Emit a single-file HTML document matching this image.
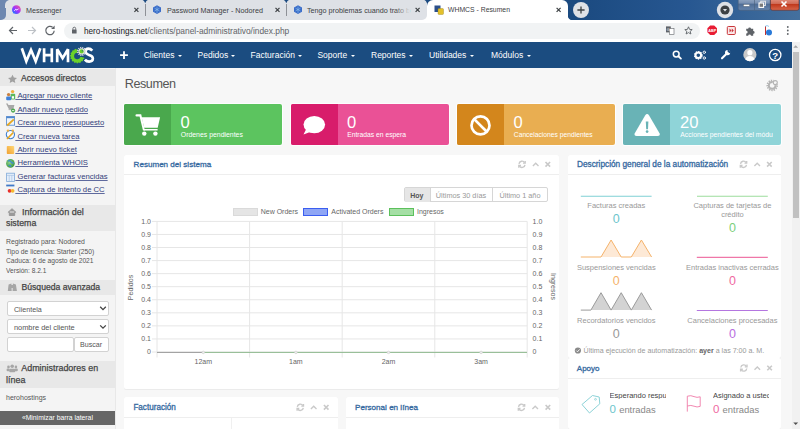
<!DOCTYPE html>
<html><head><meta charset="utf-8"><style>
*{box-sizing:border-box;margin:0;padding:0}
html,body{width:800px;height:429px;overflow:hidden;background:#f7f7f7}
body{position:relative;font-family:"Liberation Sans",sans-serif;color:#333}
.a{position:absolute}
.t{position:absolute;white-space:nowrap;line-height:1}
#ov{position:absolute;left:0;top:0;width:800px;height:429px;overflow:visible}
/* chrome */
#strip{left:0;top:0;width:800px;height:20px;background:linear-gradient(90deg,#1a477d 0%,#1b4a80 72%,#275791 86%,#44709e 100%)}
#lframe{left:0;top:0;width:5.5px;height:19.5px;background:#6d87b0;border-bottom-right-radius:5px}
#tabs{left:0;top:0;width:427px;height:20px;background:#dee1e6;border-bottom-right-radius:5px}
#atab{left:427px;top:0;width:141px;height:20px;background:#fff;border-top-left-radius:6px;border-top-right-radius:6px}
.notch{position:absolute;top:0;width:5px;height:2.6px;background:#1b4a80;border-radius:0 0 2.5px 2.5px}
.sep{position:absolute;top:4px;width:1px;height:12px;background:#8e9197}
.tabt{font-size:7.2px;color:#3c4043}
#toolbar{left:0;top:20px;width:800px;height:21.5px;background:#fff}
#omni{left:63.5px;top:22.5px;width:636px;height:16.5px;background:#f1f3f4;border-radius:8.5px}
#nav{left:0;top:41.5px;width:791.5px;height:26.2px;background:#1b4c80}
.nt{font-size:8.5px;color:#fff;top:51px}
.caret{position:absolute;top:54.8px;width:0;height:0;border-left:2.2px solid transparent;border-right:2.2px solid transparent;border-top:2.2px solid #fff}
#scroll{left:791.5px;top:41.5px;width:8.5px;height:387.5px;background:#f1f1f1}
#thumb{left:792.5px;top:52px;width:6.5px;height:166px;background:#c1c1c1}
/* sidebar */
#side{left:0;top:67.7px;width:116px;height:361.3px;background:#f4f4f4;border-right:1.5px solid #e8e8e8}
.sh{position:absolute;left:0;width:114.5px;background:#e8e8e8}
.sht{font-size:8.8px;color:#444;-webkit-text-stroke:0.25px #444}
.sl{font-size:7.7px;color:#33407a;text-decoration:underline;text-decoration-color:#5f6a9e;text-underline-offset:1px}
.si{font-size:6.85px;color:#555}
.sel{position:absolute;background:#fff;border:1px solid #d2d2d2;border-radius:2px}
/* content */
.w{position:absolute;top:104px;height:41px;width:158.2px;border-radius:2px;overflow:hidden;box-shadow:0 0 0 0.8px #fff}
.wi{position:absolute;left:0;top:0;width:47.2px;height:41px}
.wn{font-size:16.6px;color:#fff;top:114.8px}
.wl{font-size:6.9px;color:#fff;top:131.8px}
.panel{position:absolute;background:#fff;border-radius:2px;box-shadow:0 0.6px 0.8px rgba(0,0,0,0.05)}
.ph{position:absolute;left:0;right:0;height:1px;background:#eeeeee}
.pt{font-size:8.1px;color:#3569a0;-webkit-text-stroke:0.3px #3569a0}
.cl{font-size:7px;color:#666}
.al{font-size:7.5px;color:#999;text-align:center}
.an{font-size:12.5px;text-align:center}
</style></head><body>
<!-- chrome tab strip -->
<div id="strip" class="a"></div>
<div class="a" style="left:420px;top:13px;width:8px;height:7px;background:#fff"></div>
<div id="tabs" class="a"></div>
<div id="lframe" class="a"></div><div class="a" style="left:5px;top:0;width:4px;height:3px;background:#6d87b0"></div><div class="a" style="left:5px;top:0;width:8px;height:8px;background:#dee1e6;border-top-left-radius:5px"></div>
<div id="atab" class="a"></div>



<div class="sep" style="left:145px"></div>
<div class="sep" style="left:286px"></div>
<div class="t tabt" style="left:26px;top:6.6px">Messenger</div>
<div class="t tabt" style="left:167px;top:6.6px">Password Manager - Nodored</div>
<div class="t tabt" style="left:307px;top:6.6px">Tengo problemas cuando trato b</div>
<div class="t tabt" style="left:448px;top:6.9px;font-size:6.85px">WHMCS - Resumen</div>

<!-- toolbar -->
<div id="toolbar" class="a"></div>
<div id="omni" class="a"></div>
<div class="t" style="left:84px;top:26.6px;font-size:8.2px;color:#202124">hero-hostings.net<span style="color:#5f6368;font-size:8.4px">/clients/panel-administrativo/index.php</span></div>

<!-- navbar -->
<div id="nav" class="a"></div>
<div class="t nt" style="left:143.7px">Clientes</div><div class="caret" style="left:177.5px"></div>
<div class="t nt" style="left:197.6px">Pedidos</div><div class="caret" style="left:231.4px"></div>
<div class="t nt" style="left:250.6px">Facturación</div><div class="caret" style="left:298.4px"></div>
<div class="t nt" style="left:317.4px">Soporte</div><div class="caret" style="left:350.8px"></div>
<div class="t nt" style="left:371px">Reportes</div><div class="caret" style="left:408.8px"></div>
<div class="t nt" style="left:429px">Utilidades</div><div class="caret" style="left:470.4px"></div>
<div class="t nt" style="left:491px">Módulos</div><div class="caret" style="left:527.4px"></div>

<div id="scroll" class="a"></div>
<div id="thumb" class="a"></div>

<!-- sidebar -->
<div id="side" class="a"></div>
<div class="sh" style="top:69px;height:16.6px"></div>
<div class="t sht" style="left:21px;top:74.2px;font-size:8.6px">Accesos directos</div>
<div class="t sl" style="left:15.35px;top:92.4px">&nbsp;Agregar nuevo cliente</div>
<div class="t sl" style="left:15.35px;top:105.7px">&nbsp;Añadir nuevo pedido</div>
<div class="t sl" style="left:15.35px;top:119.1px">&nbsp;Crear nuevo presupuesto</div>
<div class="t sl" style="left:15.35px;top:132.5px">&nbsp;Crear nueva tarea</div>
<div class="t sl" style="left:15.35px;top:145.8px">&nbsp;Abrir nuevo ticket</div>
<div class="t sl" style="left:15.35px;top:159.2px">&nbsp;Herramienta WHOIS</div>
<div class="t sl" style="left:15.35px;top:172.6px">&nbsp;Generar facturas vencidas</div>
<div class="t sl" style="left:15.35px;top:185.9px">&nbsp;Captura de intento de CC</div>

<div class="sh" style="top:204.6px;height:26px"></div>
<div class="t sht" style="left:21.9px;top:207.6px;font-size:9.05px">Información del</div>
<div class="t sht" style="left:6px;top:219.1px;font-size:8.8px">sistema</div>
<div class="t si" style="left:6px;top:239.2px;font-size:6.85px">Registrado para: Nodored</div>
<div class="t si" style="left:6px;top:248.6px;font-size:6.75px">Tipo de licencia: Starter (250)</div>
<div class="t si" style="left:6px;top:258.1px;font-size:6.68px">Caduca: 6 de agosto de 2021</div>
<div class="t si" style="left:6px;top:267.6px;font-size:6.6px">Versión: 8.2.1</div>

<div class="sh" style="top:280px;height:14.5px"></div>
<div class="t sht" style="left:21.5px;top:283.1px;font-size:8.64px">Búsqueda avanzada</div>
<div class="sel" style="left:6.5px;top:300.6px;width:102px;height:15px"></div>
<div class="t si" style="left:13.9px;top:305.5px;font-size:7.2px">Clientela</div>
<div class="sel" style="left:6.5px;top:319.4px;width:102px;height:14.3px"></div>
<div class="t si" style="left:13.9px;top:324px;font-size:7.45px">nombre del cliente</div>
<div class="sel" style="left:6.5px;top:337.3px;width:67px;height:15.2px"></div>
<div class="sel" style="left:74px;top:337.3px;width:34.5px;height:15.2px"></div>
<div class="t si" style="left:80px;top:342.3px;font-size:7.1px">Buscar</div>

<div class="sh" style="top:361px;height:26.8px"></div>
<div class="t sht" style="left:21.25px;top:364.2px;font-size:8.93px">Administradores en</div>
<div class="t sht" style="left:6px;top:376px;font-size:8.95px">línea</div>
<div class="t si" style="left:6px;top:393.5px;font-size:7px">herohostings</div>
<div class="a" style="left:0;top:411px;width:114.8px;height:13.6px;background:#666"></div>
<div class="t" style="left:0;top:415px;width:114.8px;text-align:center;font-size:6.8px;color:#fff">«Minimizar barra lateral</div>

<!-- content -->
<div class="t" style="left:124.8px;top:78px;font-size:12.6px;letter-spacing:-0.45px;color:#555">Resumen</div>

<div class="w" style="left:124px;background:#5cc45f"><div class="wi" style="background:#4aa84d"></div></div>
<div class="w" style="left:290.9px;background:#ea5196"><div class="wi" style="background:#d81c6b"></div></div>
<div class="w" style="left:457.2px;background:#e9ae51"><div class="wi" style="background:#d3861c"></div></div>
<div class="w" style="left:623.3px;background:#8fd4d8"><div class="wi" style="background:#69b3b6"></div></div>
<div class="t wn" style="left:180.5px">0</div><div class="t wl" style="left:180.8px">Ordenes pendientes</div>
<div class="t wn" style="left:347px">0</div><div class="t wl" style="left:347.2px;font-size:6.75px">Entradas en espera</div>
<div class="t wn" style="left:513.6px">0</div><div class="t wl" style="left:513.8px;font-size:6.72px">Cancelaciones pendientes</div>
<div class="t wn" style="left:680px">20</div><div class="t wl" style="left:680.3px;width:93px;overflow:hidden;font-size:6.8px">Acciones pendientes del módulo</div>

<!-- panels -->
<div class="panel" style="left:124px;top:154.5px;width:434.7px;height:234.5px"><div class="ph" style="top:19.6px"></div></div>
<div class="t pt" style="left:133.6px;top:161.3px;font-size:8.07px">Resumen del sistema</div>
<div class="panel" style="left:567.5px;top:154.5px;width:213.5px;height:203px"><div class="ph" style="top:19.6px"></div></div>
<div class="t pt" style="left:577px;top:160.7px;font-size:8.28px">Descripción general de la automatización</div>
<div class="panel" style="left:567.5px;top:358px;width:213.8px;height:71px"><div class="ph" style="top:19.5px"></div></div>
<div class="t pt" style="left:576.8px;top:364.8px;font-size:8.02px">Apoyo</div>
<div class="panel" style="left:124px;top:397px;width:213.5px;height:40px"><div class="ph" style="top:20.3px"></div><div class="a" style="left:106.5px;top:21px;width:1px;height:20px;background:#f0f0f0"></div></div>
<div class="t pt" style="left:133.4px;top:404px;font-size:8.15px">Facturación</div>
<div class="panel" style="left:346px;top:397px;width:212.7px;height:40px"><div class="ph" style="top:20.3px"></div></div>
<div class="t pt" style="left:355px;top:404.2px;font-size:8.09px">Personal en línea</div>

<!-- chart buttons -->
<div class="a" style="left:404px;top:187px;width:143.6px;height:15.2px;border:0.8px solid #d6d6d6;border-radius:2px;background:#fff"></div>
<div class="a" style="left:404.5px;top:187.5px;width:25.1px;height:14px;background:#e6e6e6"></div>
<div class="a" style="left:429.6px;top:187.5px;width:0.8px;height:14px;background:#d6d6d6"></div>
<div class="a" style="left:492.4px;top:187.5px;width:0.8px;height:14px;background:#d6d6d6"></div>
<div class="t" style="left:404px;top:192px;width:25.6px;text-align:center;font-size:7px;font-weight:bold;color:#555">Hoy</div>
<div class="t" style="left:429.6px;top:191.8px;width:62.8px;text-align:center;font-size:7.3px;color:#999">Últimos 30 días</div>
<div class="t" style="left:492.4px;top:191.8px;width:55.2px;text-align:center;font-size:7.3px;color:#999">Último 1 año</div>

<!-- chart legend -->
<div class="a" style="left:233px;top:208px;width:25px;height:8.4px;background:#e5e5e5;border:1px solid #dadada"></div>
<div class="t cl" style="left:260.7px;top:208.2px">New Orders</div>
<div class="a" style="left:303.3px;top:208px;width:25px;height:8.4px;background:#8fa6f5;border:1.2px solid #3b5ef0"></div>
<div class="t cl" style="left:331.3px;top:208.2px">Activated Orders</div>
<div class="a" style="left:389.3px;top:208px;width:25px;height:8.4px;background:#a5dfa5;border:1.2px solid #5cc05c"></div>
<div class="t cl" style="left:417px;top:208.2px">Ingresos</div>

<!-- chart labels -->
<div class="t cl" style="left:131px;top:217.6px;width:20px;text-align:right">1.0</div>
<div class="t cl" style="left:131px;top:230.6px;width:20px;text-align:right">0.9</div>
<div class="t cl" style="left:131px;top:243.6px;width:20px;text-align:right">0.8</div>
<div class="t cl" style="left:131px;top:256.6px;width:20px;text-align:right">0.7</div>
<div class="t cl" style="left:131px;top:269.6px;width:20px;text-align:right">0.6</div>
<div class="t cl" style="left:131px;top:282.6px;width:20px;text-align:right">0.5</div>
<div class="t cl" style="left:131px;top:295.6px;width:20px;text-align:right">0.4</div>
<div class="t cl" style="left:131px;top:308.6px;width:20px;text-align:right">0.3</div>
<div class="t cl" style="left:131px;top:321.6px;width:20px;text-align:right">0.2</div>
<div class="t cl" style="left:131px;top:334.6px;width:20px;text-align:right">0.1</div>
<div class="t cl" style="left:131px;top:347.6px;width:20px;text-align:right">0</div>
<div class="t cl" style="left:532.6px;top:217.6px">1.0</div>
<div class="t cl" style="left:532.6px;top:230.6px">0.9</div>
<div class="t cl" style="left:532.6px;top:243.6px">0.8</div>
<div class="t cl" style="left:532.6px;top:256.6px">0.7</div>
<div class="t cl" style="left:532.6px;top:269.6px">0.6</div>
<div class="t cl" style="left:532.6px;top:282.6px">0.5</div>
<div class="t cl" style="left:532.6px;top:295.6px">0.4</div>
<div class="t cl" style="left:532.6px;top:308.6px">0.3</div>
<div class="t cl" style="left:532.6px;top:321.6px">0.2</div>
<div class="t cl" style="left:532.6px;top:334.6px">0.1</div>
<div class="t cl" style="left:532.6px;top:347.6px">0</div>
<div class="t cl" style="left:183.3px;top:357.5px;width:40px;text-align:center">12am</div>
<div class="t cl" style="left:275.9px;top:357.5px;width:40px;text-align:center">1am</div>
<div class="t cl" style="left:368.5px;top:357.5px;width:40px;text-align:center">2am</div>
<div class="t cl" style="left:461.1px;top:357.5px;width:40px;text-align:center">3am</div>
<div class="t cl" style="left:110.3px;top:283.5px;width:40px;text-align:center;transform:rotate(-90deg)">Pedidos</div>
<div class="t cl" style="left:532.6px;top:282.5px;width:40px;text-align:center;transform:rotate(90deg)">Ingresos</div>

<!-- automation -->
<div class="t al" style="left:566.3px;top:202.3px;width:100px">Facturas creadas</div>
<div class="t an" style="left:566.3px;top:213.3px;width:100px;color:#6cc5cc">0</div>
<div class="t al" style="left:682.4px;top:202.3px;width:100px">Capturas de tarjetas de</div>
<div class="t al" style="left:682.4px;top:210.7px;width:100px">crédito</div>
<div class="t an" style="left:682.4px;top:221.7px;width:100px;color:#7ccf7c">0</div>
<div class="t al" style="left:566.3px;top:263.9px;width:100px">Suspensiones vencidas</div>
<div class="t an" style="left:566.3px;top:274.9px;width:100px;color:#f5b36b">0</div>
<div class="t al" style="left:682.4px;top:263.9px;width:100px">Entradas inactivas cerradas</div>
<div class="t an" style="left:682.4px;top:274.9px;width:100px;color:#ef6a9f">0</div>
<div class="t al" style="left:566.3px;top:316.6px;width:100px">Recordatorios vencidos</div>
<div class="t an" style="left:566.3px;top:327.8px;width:100px;color:#999">0</div>
<div class="t al" style="left:682.4px;top:316.6px;width:100px">Cancelaciones procesadas</div>
<div class="t an" style="left:682.4px;top:327.8px;width:100px;color:#b86ee0">0</div>
<div class="t" style="left:583.6px;top:347.6px;font-size:7.1px;color:#999">Última ejecución de automatización: <b style="color:#666">ayer</b> a las 7:00 a. M.</div>

<!-- apoyo -->
<div class="t" style="left:609.6px;top:391.5px;font-size:7.5px;color:#444;width:56px;overflow:hidden">Esperando respuesta</div>
<div class="t" style="left:609.6px;top:403.6px;font-size:11.5px;color:#6cc5cc">0 <span style="font-size:9.4px;color:#888">entradas</span></div>
<div class="t" style="left:713px;top:392px;font-size:7.5px;color:#444;width:56px;overflow:hidden">Asignado a usted</div>
<div class="t" style="left:713px;top:403.6px;font-size:11.5px;color:#ef6a9f">0 <span style="font-size:9.4px;color:#888">entradas</span></div>

<svg id="ov" viewBox="0 0 800 429">
<line x1="152" y1="221.40" x2="527.2" y2="221.40" stroke="#e6e6e6" stroke-width="1"/>
<line x1="152" y1="234.46" x2="527.2" y2="234.46" stroke="#e6e6e6" stroke-width="1"/>
<line x1="152" y1="247.52" x2="527.2" y2="247.52" stroke="#e6e6e6" stroke-width="1"/>
<line x1="152" y1="260.58" x2="527.2" y2="260.58" stroke="#e6e6e6" stroke-width="1"/>
<line x1="152" y1="273.64" x2="527.2" y2="273.64" stroke="#e6e6e6" stroke-width="1"/>
<line x1="152" y1="286.70" x2="527.2" y2="286.70" stroke="#e6e6e6" stroke-width="1"/>
<line x1="152" y1="299.76" x2="527.2" y2="299.76" stroke="#e6e6e6" stroke-width="1"/>
<line x1="152" y1="312.82" x2="527.2" y2="312.82" stroke="#e6e6e6" stroke-width="1"/>
<line x1="152" y1="325.88" x2="527.2" y2="325.88" stroke="#e6e6e6" stroke-width="1"/>
<line x1="152" y1="338.94" x2="527.2" y2="338.94" stroke="#e6e6e6" stroke-width="1"/>
<line x1="152" y1="352.00" x2="527.2" y2="352.00" stroke="#e6e6e6" stroke-width="1"/>
<line x1="157" y1="221.4" x2="157" y2="357.5" stroke="#e6e6e6" stroke-width="1"/>
<line x1="249.6" y1="221.4" x2="249.6" y2="357.5" stroke="#e6e6e6" stroke-width="1"/>
<line x1="342.2" y1="221.4" x2="342.2" y2="357.5" stroke="#e6e6e6" stroke-width="1"/>
<line x1="434.8" y1="221.4" x2="434.8" y2="357.5" stroke="#e6e6e6" stroke-width="1"/>
<line x1="527.2" y1="221.4" x2="527.2" y2="357.5" stroke="#e6e6e6" stroke-width="1"/>
<line x1="157" y1="352.4" x2="203" y2="352.4" stroke="#9a9a9a" stroke-width="1"/>
<line x1="204" y1="352.4" x2="527" y2="352.4" stroke="#8fb98f" stroke-width="1"/>
<circle cx="203.3" cy="352.4" r="1.3" fill="#eee" stroke="#ccc" stroke-width="0.6"/>
<circle cx="295.9" cy="352.4" r="1.3" fill="#eee" stroke="#ccc" stroke-width="0.6"/>
<circle cx="388.5" cy="352.4" r="1.3" fill="#eee" stroke="#ccc" stroke-width="0.6"/>
<circle cx="481.1" cy="352.4" r="1.3" fill="#eee" stroke="#ccc" stroke-width="0.6"/>
<!-- automation lines -->
<line x1="580.8" y1="196.2" x2="651.6" y2="196.2" stroke="#7fd0d4" stroke-width="1.1"/>
<line x1="697" y1="196.2" x2="767.8" y2="196.2" stroke="#9ddc9d" stroke-width="1.1"/>
<polygon points="580.8,257 601.0,257 611.1,240 621.2,257 631.3,257 641.4,240 651.6,257" fill="#fde9d6"/>
<polyline points="580.8,257 601.0,257 611.1,240 621.2,257 631.3,257 641.4,240 651.6,257" fill="none" stroke="#f5b36b" stroke-width="1"/>
<line x1="696.8" y1="257.4" x2="767.8" y2="257.4" stroke="#ef77a8" stroke-width="1.1"/>
<polygon points="580.8,310.1 590.9,310.1 601.0,292.7 611.1,310.1 621.2,292.7 631.3,310.1 641.4,292.7 651.6,310.1" fill="#d3d3d3"/>
<polyline points="580.8,310.1 590.9,310.1 601.0,292.7 611.1,310.1 621.2,292.7 631.3,310.1 641.4,292.7 651.6,310.1" fill="none" stroke="#9b9b9b" stroke-width="1"/>
<line x1="696.8" y1="310.5" x2="767.8" y2="310.5" stroke="#b476e0" stroke-width="1.1"/>
<!-- check -->
<circle cx="577.9" cy="350.5" r="3.1" fill="#8a8a8a"/>
<polyline points="576.3,350.6 577.5,351.8 579.6,349.4" fill="none" stroke="#fff" stroke-width="0.9"/>

<!-- widget icons -->
<g fill="#fff">
 <path d="M136.6,114.3 H141.2 L144.9,130.6 H143 L139.6,116.6 H136.6 A1.15,1.15 0 0 1 136.6,114.3 z"/>
 <path d="M141.6,117.3 H160.1 L157.7,127.7 H144.2 z M143.6,128.9 H157.6 V130.6 H144 z"/>
 <circle cx="144.3" cy="133.6" r="2.2"/><circle cx="155.4" cy="133.6" r="2.2"/>
 <ellipse cx="314.3" cy="124.6" rx="10.8" ry="8.6"/>
 <path d="M306,129.5 L303.5,134.6 L311.5,131.6 z"/>
 <path d="M634.8,133.2 L645.1,115.4 Q647.1,112.6 649.1,115.4 L659.5,133.2 Q660.6,135.9 657.6,135.9 L636.7,135.9 Q633.7,135.9 634.8,133.2 z"/>
</g>
<path d="M645.8,121.6 h2.6 l-0.4,7.6 h-1.8 z" fill="#69b3b6"/>
<circle cx="647.1" cy="131.6" r="1.35" fill="#69b3b6"/>
<circle cx="480.5" cy="125.4" r="9" fill="none" stroke="#fff" stroke-width="2.7"/>
<line x1="474.2" y1="119.1" x2="486.8" y2="131.7" stroke="#fff" stroke-width="2.7"/>

<!-- panel header icons -->
<g fill="none" stroke="#c9c9c9" stroke-width="1.35" stroke-linecap="butt">
 <g transform="translate(522,164.3)"><path d="M-3,-0.5 A3,3 0 0 1 2.6,-1.6 M3,0.5 A3,3 0 0 1 -2.6,1.6"/><path d="M3.2,-3.4 v2.2 h-2.2 M-3.2,3.4 v-2.2 h2.2"/><polyline points="-2.8,1.8 0,-1 2.8,1.8" transform="translate(13.7,0)"/><path d="M23.5,-2.3 l4.6,4.6 M28.1,-2.3 l-4.6,4.6" stroke-width="1.6"/></g>
 <g transform="translate(743.5,164.3)"><path d="M-3,-0.5 A3,3 0 0 1 2.6,-1.6 M3,0.5 A3,3 0 0 1 -2.6,1.6"/><path d="M3.2,-3.4 v2.2 h-2.2 M-3.2,3.4 v-2.2 h2.2"/><polyline points="-2.8,1.8 0,-1 2.8,1.8" transform="translate(13.7,0)"/><path d="M23.6,-2.3 l4.6,4.6 M28.2,-2.3 l-4.6,4.6" stroke-width="1.6"/></g>
 <g transform="translate(743.8,368)"><path d="M-3,-0.5 A3,3 0 0 1 2.6,-1.6 M3,0.5 A3,3 0 0 1 -2.6,1.6"/><path d="M3.2,-3.4 v2.2 h-2.2 M-3.2,3.4 v-2.2 h2.2"/><polyline points="-2.8,1.8 0,-1 2.8,1.8" transform="translate(13.5,0)"/><path d="M23.5,-2.3 l4.6,4.6 M28.1,-2.3 l-4.6,4.6" stroke-width="1.6"/></g>
 <g transform="translate(300.3,407.3)"><path d="M-3,-0.5 A3,3 0 0 1 2.6,-1.6 M3,0.5 A3,3 0 0 1 -2.6,1.6"/><path d="M3.2,-3.4 v2.2 h-2.2 M-3.2,3.4 v-2.2 h2.2"/><polyline points="-2.8,1.8 0,-1 2.8,1.8" transform="translate(13.4,0)"/><path d="M23.6,-2.3 l4.6,4.6 M28.2,-2.3 l-4.6,4.6" stroke-width="1.6"/></g>
 <g transform="translate(521.5,407.3)"><path d="M-3,-0.5 A3,3 0 0 1 2.6,-1.6 M3,0.5 A3,3 0 0 1 -2.6,1.6"/><path d="M3.2,-3.4 v2.2 h-2.2 M-3.2,3.4 v-2.2 h2.2"/><polyline points="-2.8,1.8 0,-1 2.8,1.8" transform="translate(13.7,0)"/><path d="M24.1,-2.3 l4.6,4.6 M28.7,-2.3 l-4.6,4.6" stroke-width="1.6"/></g>
</g>

<!-- apoyo icons -->
<path d="M582,404.5 L592.5,395.5 L599.2,397 L599.8,403.8 L589.5,413 z" fill="none" stroke="#7fcdd2" stroke-width="0.9" stroke-linejoin="round"/>
<circle cx="595.5" cy="399.3" r="0.9" fill="none" stroke="#7fcdd2" stroke-width="0.7"/>
<path d="M687.3,411.6 V396.2 Q691,395 694,396.6 Q697,398 700.2,396.8 V406.4 Q697,407.6 694,406.2 Q691,404.8 687.3,406" fill="none" stroke="#ef7aa8" stroke-width="0.9"/>

<!-- settings gear -->
<g transform="translate(772.2,85.4)"><circle r="4.9" fill="none" stroke="#b4b4b4" stroke-width="1.7" stroke-dasharray="1.35 1.0"/><circle r="3.4" fill="none" stroke="#b4b4b4" stroke-width="2"/><circle cx="3.1" cy="-2.8" r="2.6" fill="#f7f7f7"/><circle cx="3.1" cy="-2.8" r="2" fill="none" stroke="#b4b4b4" stroke-width="1.1"/></g>

<!-- navbar -->
<path d="M124,51.3 v7.8 M120.1,55.2 h7.8" stroke="#fff" stroke-width="1.8"/>
<!-- logo -->
<g fill="none" stroke="#fff" stroke-width="2.7" stroke-linejoin="miter" stroke-miterlimit="3">
 <polyline points="21.8,48.3 26.3,61.2 31,50 35.7,61.2 40.3,48.3"/>
 <path d="M44.1,48.2 V62.2 M51.8,48.2 V62.2 M44.1,55.1 H51.8"/>
 <polyline points="57.2,62.2 57.2,49.2 62.6,58.2 68,49.2 68,62.2"/>
</g>
<path d="M92.3,50.6 Q90.6,48.6 88.4,48.6 Q85.6,48.6 85.6,51.6 Q85.6,54 89,54.9 Q92.9,55.9 92.9,58.6 Q92.9,61.6 89.1,61.6 Q86.4,61.6 84.9,59.6" fill="none" stroke="#fff" stroke-width="2.6"/>
<path d="M82.23,57.29 A5,5 0 1 1 77.4,51" fill="none" stroke="#6bd12a" stroke-width="3.4"/>
<path d="M83.68,57.68 A6.5,6.5 0 1 1 77.4,49.5" fill="none" stroke="#6bd12a" stroke-width="1.6" stroke-dasharray="1.35 1.2"/>
<g transform="translate(81.6,51.4)">
 <circle r="3.8" fill="none" stroke="#e4e4e4" stroke-width="1.5" stroke-dasharray="1.1 0.9"/>
 <circle r="3.1" fill="#e4e4e4"/>
 <circle r="2.1" fill="#6bd12a"/>
 <circle cx="0.7" cy="-0.6" r="0.6" fill="#1b4c80"/>
</g>
<!-- right nav icons -->
<g fill="none" stroke="#fff" stroke-linecap="round">
 <circle cx="676.2" cy="54.1" r="2.9" stroke-width="1.5"/>
 <line x1="678.4" y1="56.3" x2="680.9" y2="58.6" stroke-width="1.9"/>
 <circle cx="704.3" cy="52.3" r="1.2" stroke-width="0.9"/>
 <circle cx="704.3" cy="58" r="1.2" stroke-width="0.9"/>
</g>
<g transform="translate(698.3,55.3)"><circle r="2.8" fill="none" stroke="#fff" stroke-width="2" /><circle r="3.7" fill="none" stroke="#fff" stroke-width="1.3" stroke-dasharray="1.4 1.0"/></g>
<line x1="722" y1="58.3" x2="726.6" y2="53.7" stroke="#fff" stroke-width="2.1" stroke-linecap="round"/>
<circle cx="727.6" cy="52.6" r="2.6" fill="#fff"/><path d="M727.9,49.2 L731.2,52.5 L729.3,53.2 L727.4,51.3 z" fill="#1b4c80"/>
<circle cx="749.9" cy="54.7" r="6.6" fill="#c9c9c9"/>
<circle cx="749.9" cy="52.7" r="2.6" fill="#fff"/>
<path d="M745.3,59.3 Q746.5,56 749.9,56 Q753.3,56 754.5,59.3 Q752.6,61.3 749.9,61.3 Q747.2,61.3 745.3,59.3 z" fill="#fff"/>
<circle cx="775.2" cy="55" r="5.7" fill="none" stroke="#fff" stroke-width="1.3"/>
<text x="775.2" y="58.6" font-family="Liberation Sans" font-weight="bold" font-size="9.6" fill="#fff" text-anchor="middle">?</text>

<!-- sidebar header icons -->
<path d="M12.5,74.8 L13.9,77.6 L17,78 L14.7,80.1 L15.3,83.1 L12.5,81.6 L9.7,83.1 L10.3,80.1 L8,78 L11.1,77.6 z" fill="#a0a0a0"/>
<path d="M7.9,212.5 L12,208.7 L16.1,212.5 M9.3,211.5 V215.5 H14.7 V211.5" fill="#999" stroke="#999" stroke-width="1"/>
<path d="M7.8,291 L8.6,284.6 L11.4,283.6 L11.7,291 z M12.6,291 L12.9,283.6 L15.9,284.6 L16.9,291 z M11,285 H13 V288 H11z" fill="#a6a6a6"/>
<g fill="#a6a6a6"><circle cx="12.2" cy="366.2" r="1.8"/><circle cx="8.5" cy="366.9" r="1.3"/><circle cx="15.9" cy="366.9" r="1.3"/><rect x="9.2" y="368.8" width="6.2" height="3.4" rx="1.2"/><rect x="6.6" y="368.6" width="3" height="2.6" rx="1"/><rect x="14.8" y="368.6" width="3" height="2.6" rx="1"/></g>

<!-- sidebar link icons -->
<defs>
<linearGradient id="tk" x1="0" y1="1" x2="1" y2="0"><stop offset="0" stop-color="#f0a030"/><stop offset="1" stop-color="#ffd878"/></linearGradient>
<radialGradient id="gl" cx="0.4" cy="0.4" r="0.6"><stop offset="0" stop-color="#8fd08f"/><stop offset="1" stop-color="#3f9a3f"/></radialGradient>
</defs>
<g>
 <circle cx="12.6" cy="91.6" r="1.7" fill="#f0b040"/><rect x="10.6" y="93.8" width="4.6" height="5.6" rx="1" fill="#5cb85c"/><rect x="11.8" y="96.2" width="2.2" height="2.4" fill="#fff"/>
 <circle cx="8.6" cy="94.6" r="1.7" fill="#c98040"/><rect x="6.2" y="96.6" width="5" height="3.6" rx="1" fill="#3f80d8"/>
 <path d="M6,103.6 h1.8 l0.6,1.4 h6 l-1,4 h-4.6z" fill="#a8a8a8"/><path d="M8.6,109.6 h4.2" stroke="#999" stroke-width="0.8"/><circle cx="13.1" cy="110.6" r="2.1" fill="#4aa84d"/><path d="M12,110.6 h2.2" stroke="#fff" stroke-width="0.8"/>
 <rect x="6.4" y="116.6" width="8.2" height="8.6" fill="#eef4fb" stroke="#4f86cc" stroke-width="0.8"/><rect x="6.4" y="116.6" width="8.2" height="1.6" fill="#4f86cc"/><path d="M7.2,125.5 L13.8,119.3" stroke="#e8a820" stroke-width="1.8"/>
 <circle cx="10.4" cy="134.6" r="4.1" fill="#fafcff" stroke="#3f80d0" stroke-width="1.1"/><circle cx="8" cy="130.6" r="1.2" fill="#f0b040"/><circle cx="12.8" cy="130.6" r="1.2" fill="#f0b040"/><path d="M7,139 L13.2,132.6" stroke="#e8a820" stroke-width="1.6"/>
 <rect x="6.8" y="146" width="7.4" height="8" rx="0.8" fill="url(#tk)"/>
 <circle cx="10.4" cy="163.4" r="4.3" fill="url(#gl)"/><path d="M8,161.2 q1.8,-1.2 3,0.6 q0.8,1.6 2.8,1.2 M8.6,165.6 q1.5,-0.5 2.5,1" fill="none" stroke="#3a8ad8" stroke-width="1.2"/>
 <rect x="6.6" y="173.2" width="7.8" height="8.2" fill="#e4eefa" stroke="#7fa8d8" stroke-width="0.8"/><path d="M6.6,175.4 h7.8 M9.2,175.4 v6 M11.8,175.4 v6" stroke="#9fbce0" stroke-width="0.6"/>
 <rect x="6.2" y="184.6" width="8.2" height="8.6" fill="#f4f4f4"/><rect x="6.2" y="184.6" width="8.2" height="1.8" fill="#3f78c8"/><circle cx="9.6" cy="190.8" r="1.9" fill="#e8302a"/><circle cx="12.6" cy="190.8" r="1.9" fill="#f5b830"/>
</g>
<!-- select chevrons -->
<g fill="none" stroke="#444" stroke-width="1.3"><polyline points="100.2,306.8 103,309.6 105.8,306.8"/><polyline points="100.2,325.4 103,328.2 105.8,325.4"/></g>

<!-- tab favicons -->
<defs><linearGradient id="mg" x1="0" y1="1" x2="1" y2="0"><stop offset="0" stop-color="#0a7cff"/><stop offset="0.5" stop-color="#a033ff"/><stop offset="1" stop-color="#ff5c87"/></linearGradient></defs>
<circle cx="16.4" cy="9.7" r="4.4" fill="url(#mg)"/><path d="M12.9,13.6 L13.4,11.5 L15,12.8z" fill="#2a7cff"/>
<polyline points="14.3,10.8 15.8,9.2 17,10.2 18.6,8.6" fill="none" stroke="#fff" stroke-width="0.9"/>
<g fill="#3a6cc8"><polygon points="157,5.2 161,7.4 161,11.8 157,14 153,11.8 153,7.4"/><polygon points="298,5.2 302,7.4 302,11.8 298,14 294,11.8 294,7.4"/></g>
<g fill="none" stroke="#9fd0f5" stroke-width="0.5"><path d="M157,6.5 v6.5 M154.5,8.2 l5,2.8 M159.5,8.2 l-5,2.8"/><path d="M298,6.5 v6.5 M295.5,8.2 l5,2.8 M300.5,8.2 l-5,2.8"/></g>
<rect x="434.5" y="5.5" width="6" height="6.5" fill="#2b4f8a"/><rect x="438" y="8.5" width="5.5" height="6" rx="1" fill="#e3c02a" stroke="#9a8420" stroke-width="0.4"/>
<!-- tab closes -->
<g stroke="#3c4043" stroke-width="1.2" fill="none">
 <path d="M134.4,7.8 l4,4 M138.4,7.8 l-4,4"/>
 <path d="M275.5,7.8 l4,4 M279.5,7.8 l-4,4"/>
 <path d="M415.6,7.8 l4,4 M419.6,7.8 l-4,4"/>
 <path d="M556.6,7.8 l4,4 M560.6,7.8 l-4,4"/>
</g>
<!-- fade of 3rd tab text -->
<defs><linearGradient id="fade" x1="0" x2="1"><stop offset="0" stop-color="#dee1e6" stop-opacity="0"/><stop offset="1" stop-color="#dee1e6"/></linearGradient></defs>
<rect x="395" y="3" width="15" height="14" fill="url(#fade)"/>
<g fill="#1b4a80"><path d="M142.6,0 h5.2 q-1.6,0.6 -2.6,3.2 q-1,-2.6 -2.6,-3.2z"/><path d="M283.7,0 h5.2 q-1.6,0.6 -2.6,3.2 q-1,-2.6 -2.6,-3.2z"/><path d="M424.4,0 h5.2 q-1.6,0.6 -2.6,3.2 q-1,-2.6 -2.6,-3.2z"/></g>
<path d="M567.5,15 V20.2 H572.7 A5.2,5.2 0 0 1 567.5,15z" fill="#fff"/>
<!-- new tab -->
<circle cx="581" cy="10" r="8" fill="#dee1e6"/>
<path d="M581,6.4 v7.2 M577.4,10 h7.2" stroke="#3c4043" stroke-width="1.3"/>
<!-- tab search -->
<circle cx="725" cy="10" r="8.2" fill="#dee1e6"/>
<circle cx="725" cy="10" r="4.6" fill="#3c4043"/>
<path d="M722.9,9 h4.2 l-2.1,2.4z" fill="#dee1e6"/>
<!-- window buttons -->
<defs>
 <linearGradient id="wb" x1="0" y1="0" x2="0" y2="1"><stop offset="0" stop-color="#9fb2cc"/><stop offset="0.45" stop-color="#7890b2"/><stop offset="0.55" stop-color="#4f6d96"/><stop offset="1" stop-color="#6584ac"/></linearGradient>
 <linearGradient id="wr" x1="0" y1="0" x2="0" y2="1"><stop offset="0" stop-color="#e8a090"/><stop offset="0.5" stop-color="#d06a55"/><stop offset="0.55" stop-color="#c0381c"/><stop offset="1" stop-color="#d8664a"/></linearGradient>
</defs>
<rect x="738.2" y="-3" width="32" height="13.3" rx="2" fill="url(#wb)" stroke="#4a5f7a" stroke-width="0.6"/>
<line x1="754.5" y1="0" x2="754.5" y2="10" stroke="#4a5f7a" stroke-width="0.6"/>
<rect x="770.5" y="-3" width="28.5" height="13.3" rx="2" fill="url(#wr)" stroke="#5a3030" stroke-width="0.6"/>
<rect x="743.5" y="4.5" width="6" height="1.8" fill="#fff" stroke="#555" stroke-width="0.3"/>
<rect x="760.8" y="1.2" width="4.6" height="4.2" fill="none" stroke="#e8e8e8" stroke-width="1"/><rect x="759" y="3" width="4.6" height="4.4" fill="#7a7a7a" stroke="#fff" stroke-width="1.1"/>
<path d="M781.5,1.5 l5,5 M786.5,1.5 l-5,5" stroke="#fff" stroke-width="1.6"/>
<!-- toolbar -->
<g fill="none" stroke="#5f6368" stroke-width="1.2">
 <path d="M17,30.5 H9.5 M13,27 L9.5,30.5 L13,34"/>
 <path d="M28,30.5 H35.5 M32,27 L35.5,30.5 L32,34" stroke="#bdc1c6"/>
 <path d="M54.2,30.8 A4.2,4.2 0 1 1 52.6,27.2"/>
</g>
<path d="M54.6,25.5 V29 H51.1z" fill="#5f6368"/>
<rect x="72" y="29.6" width="4.6" height="3.8" rx="0.5" fill="#5f6368"/>
<path d="M72.9,29.8 v-1.2 a1.4,1.4 0 0 1 2.8,0 v1.2" fill="none" stroke="#5f6368" stroke-width="0.9"/>
<!-- translate -->
<rect x="666" y="26.4" width="4.8" height="6" fill="#5f6368"/><rect x="669.3" y="28.5" width="4.7" height="6" fill="#fff" stroke="#5f6368" stroke-width="0.6"/>
<text x="668.4" y="31.2" font-family="Liberation Sans" font-size="4" fill="#fff" text-anchor="middle">G</text>
<path d="M688.5,26.8 L689.6,29.4 L692.2,29.6 L690.2,31.3 L690.9,34 L688.5,32.6 L686.1,34 L686.8,31.3 L684.8,29.6 L687.4,29.4 z" fill="none" stroke="#5f6368" stroke-width="0.9" stroke-linejoin="round"/>
<!-- ABP -->
<polygon points="710.2,25.5 714.2,25.5 717,28.3 717,32.3 714.2,35.1 710.2,35.1 707.4,32.3 707.4,28.3" fill="#e81c33"/>
<text x="712.2" y="32" font-family="Liberation Sans" font-weight="bold" font-size="3.8" fill="#fff" text-anchor="middle">ABP</text>
<!-- red ext -->
<rect x="727.3" y="26.5" width="8" height="8" rx="1" fill="#fbeaea" stroke="#c9353a" stroke-width="1"/>
<path d="M729.5,28.5 l2,2 l-2,2z M731.8,28.5 l2,2 l-2,2z" fill="#c9353a"/>
<!-- puzzle -->
<path d="M746.2,28.8 h2 a1.4,1.4 0 0 1 2.8,0 h2.2 v2.2 a1.4,1.4 0 0 1 0,2.8 v2 h-2.2 a1.4,1.4 0 0 0 -2.8,0 h-2 v-2.2 a1.4,1.4 0 0 0 0,-2.8z" fill="#5f6368"/>
<!-- ext with bird -->
<line x1="765.5" y1="26" x2="765.5" y2="35" stroke="#c03030" stroke-width="1"/>
<circle cx="769" cy="32.5" r="3" fill="#2a7ad8"/><path d="M765,26.5 q2,-2 4,0" stroke="#7ac0f0" fill="none" stroke-width="0.8"/>
<!-- kebab -->
<g fill="#5f6368"><circle cx="787.8" cy="27" r="0.9"/><circle cx="787.8" cy="30.5" r="0.9"/><circle cx="787.8" cy="34" r="0.9"/></g>
<!-- scrollbar arrows -->
<path d="M793.3,47.8 L795.7,45.2 L798.1,47.8z" fill="#a3a3a3"/>
<path d="M793.3,422.5 L795.7,425 L798.1,422.5z" fill="#505050"/>

</svg>
</body></html>
